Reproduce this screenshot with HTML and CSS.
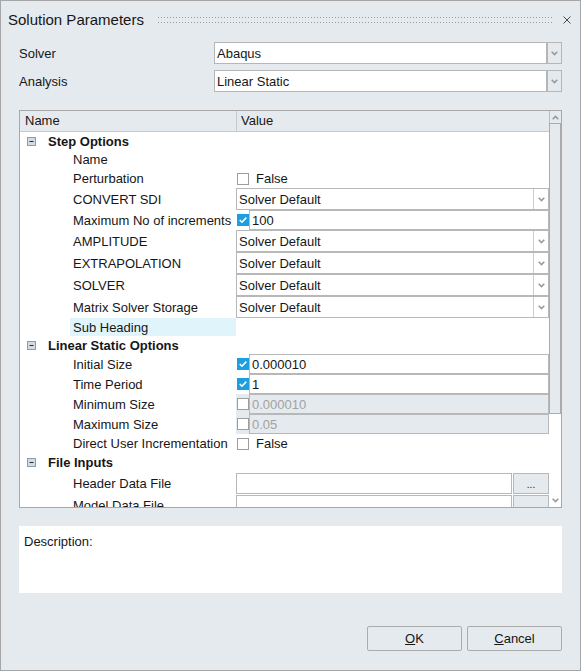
FILE: index.html
```html
<!DOCTYPE html>
<html lang="en">
 <head>
	<title>Solution Parameters</title>
	<meta charset="utf-8"/>
	<link rel="stylesheet" href="styles.css">
 </head>

 <body>
	<div id="dialog">
		<div class="titlebar">
			<span class="title">Solution Parameters</span>
			<span class="grip"></span>
			<svg class="close" width="8" height="8" viewBox="0 0 8 8"><path d="M0.5 0.5L7.5 7.5M7.5 0.5L0.5 7.5" stroke="#4a4a4a" stroke-width="1"/></svg>
		</div>

		<div class="content">
			<div class="form">
				<label>Solver</label>
				<div class="fcombo"><span class="ftext">Abaqus</span><span class="fbtn"><svg width="7" height="5" viewBox="0 0 7 5"><polyline points="0.7,0.7 3.5,3.6 6.3,0.7" fill="none" stroke="#9a9a9a" stroke-width="1.6"/></svg></span></div>
				<label>Analysis</label>
				<div class="fcombo"><span class="ftext">Linear Static</span><span class="fbtn"><svg width="7" height="5" viewBox="0 0 7 5"><polyline points="0.7,0.7 3.5,3.6 6.3,0.7" fill="none" stroke="#9a9a9a" stroke-width="1.6"/></svg></span></div>
			</div>

			<div class="tree">
				<div class="treeMain">
					<div class="thead"><div>Name</div><div class="hval">Value</div></div>

					<div class="group"><svg width="9" height="9" viewBox="0 0 9 9"><rect x="0.5" y="0.5" width="8" height="8" fill="#d3dce4" stroke="#8c9cab"/><path d="M2.5 4.5H6.5" stroke="#2a2a2a"/></svg>Step Options</div>
					<div class="row"><div class="name">Name</div><div class="val"></div></div>
					<div class="row"><div class="name">Perturbation</div><div class="val"><span class="chk"></span><span class="txt">False</span></div></div>
					<div class="row cb"><div class="name">CONVERT SDI</div><div class="val"><div class="combo"><span>Solver Default</span><i><svg width="7" height="5" viewBox="0 0 7 5"><polyline points="0.7,0.7 3.5,3.6 6.3,0.7" fill="none" stroke="#9a9a9a" stroke-width="1.6"/></svg></i></div></div></div>
					<div class="row tb"><div class="name">Maximum No of increments</div><div class="val"><span class="chk on"><svg width="10" height="10" viewBox="0 0 10 10"><polyline points="1.8,5 4,7.2 8.3,2.6" fill="none" stroke="#fff" stroke-width="1.6"/></svg></span><span class="tbox">100</span></div></div>
					<div class="row cb"><div class="name">AMPLITUDE</div><div class="val"><div class="combo"><span>Solver Default</span><i><svg width="7" height="5" viewBox="0 0 7 5"><polyline points="0.7,0.7 3.5,3.6 6.3,0.7" fill="none" stroke="#9a9a9a" stroke-width="1.6"/></svg></i></div></div></div>
					<div class="row cb"><div class="name">EXTRAPOLATION</div><div class="val"><div class="combo"><span>Solver Default</span><i><svg width="7" height="5" viewBox="0 0 7 5"><polyline points="0.7,0.7 3.5,3.6 6.3,0.7" fill="none" stroke="#9a9a9a" stroke-width="1.6"/></svg></i></div></div></div>
					<div class="row cb"><div class="name">SOLVER</div><div class="val"><div class="combo"><span>Solver Default</span><i><svg width="7" height="5" viewBox="0 0 7 5"><polyline points="0.7,0.7 3.5,3.6 6.3,0.7" fill="none" stroke="#9a9a9a" stroke-width="1.6"/></svg></i></div></div></div>
					<div class="row cb"><div class="name">Matrix Solver Storage</div><div class="val"><div class="combo"><span>Solver Default</span><i><svg width="7" height="5" viewBox="0 0 7 5"><polyline points="0.7,0.7 3.5,3.6 6.3,0.7" fill="none" stroke="#9a9a9a" stroke-width="1.6"/></svg></i></div></div></div>
					<div class="row sub"><div class="name hl">Sub Heading</div><div class="val"></div></div>

					<div class="group"><svg width="9" height="9" viewBox="0 0 9 9"><rect x="0.5" y="0.5" width="8" height="8" fill="#d3dce4" stroke="#8c9cab"/><path d="M2.5 4.5H6.5" stroke="#2a2a2a"/></svg>Linear Static Options</div>
					<div class="row tb"><div class="name">Initial Size</div><div class="val"><span class="chk on"><svg width="10" height="10" viewBox="0 0 10 10"><polyline points="1.8,5 4,7.2 8.3,2.6" fill="none" stroke="#fff" stroke-width="1.6"/></svg></span><span class="tbox">0.000010</span></div></div>
					<div class="row tb"><div class="name">Time Period</div><div class="val"><span class="chk on"><svg width="10" height="10" viewBox="0 0 10 10"><polyline points="1.8,5 4,7.2 8.3,2.6" fill="none" stroke="#fff" stroke-width="1.6"/></svg></span><span class="tbox">1</span></div></div>
					<div class="row tb off"><div class="name">Minimum Size</div><div class="val"><span class="chk"></span><span class="tbox">0.000010</span></div></div>
					<div class="row tb off"><div class="name">Maximum Size</div><div class="val"><span class="chk"></span><span class="tbox">0.05</span></div></div>
					<div class="row"><div class="name">Direct User Incrementation</div><div class="val"><span class="chk"></span><span class="txt">False</span></div></div>

					<div class="group gf"><svg width="9" height="9" viewBox="0 0 9 9"><rect x="0.5" y="0.5" width="8" height="8" fill="#d3dce4" stroke="#8c9cab"/><path d="M2.5 4.5H6.5" stroke="#2a2a2a"/></svg>File Inputs</div>
					<div class="row fl"><div class="name">Header Data File</div><div class="val"><span class="tbox file"></span><span class="browse">...</span></div></div>
					<div class="row fl"><div class="name">Model Data File</div><div class="val"><span class="tbox file"></span><span class="browse"></span></div></div>
				</div>

				<div class="scroll">
					<div class="sbUp"><svg width="7" height="5" viewBox="0 0 7 5"><polyline points="0.7,4.3 3.5,1.4 6.3,4.3" fill="none" stroke="#9a9a9a" stroke-width="1.6"/></svg></div>
					<div class="sbThumb"></div>
					<div class="sbTrack"></div>
					<div class="sbDown"><svg width="7" height="5" viewBox="0 0 7 5"><polyline points="0.7,0.7 3.5,3.6 6.3,0.7" fill="none" stroke="#9a9a9a" stroke-width="1.6"/></svg></div>
				</div>
			</div>

			<div class="desc">Description:</div>

			<div class="btns">
				<button type="button"><u>O</u>K</button>
				<button type="button"><u>C</u>ancel</button>
			</div>
		</div>
	</div>
 </body>
</html>
```

FILE: styles.css
```css
*{margin:0; padding:0; box-sizing:border-box;}
body{font-family:"Liberation Sans", Arial, sans-serif; font-size:13px; color:#161616; background:#e5eaee;}

/*######### dialog #########*/
	#dialog{width:581px; height:671px; border:1px solid #a6a6a6; background:#e5eaee; overflow:hidden;}

/*######### titlebar #########*/
	.titlebar{display:flex; align-items:center; height:36px; padding:1px 9px 0 7px;}
	.titlebar .title{font-size:15px; white-space:nowrap;}
	/* two rows of dots (grip) */
	.titlebar .grip{flex:1; height:6px; margin:0 11px 0 14px;
		background:linear-gradient(90deg, #9a9a9a 1px, transparent 1px) 0 0/3px 1px repeat-x,
		           linear-gradient(90deg, #9a9a9a 1px, transparent 1px) 0 100%/3px 1px repeat-x;}
	.titlebar .close{display:block;}

	.content{padding:0 18px;}

/*######### solver / analysis #########*/
	.form{display:grid; grid-template-columns:195px 1fr; row-gap:6px; padding-top:5px;}
	.form label{padding-top:1px; line-height:21px;}
	.fcombo{display:flex; height:22px;}
	.fcombo .ftext{flex:1; background:#fff; border:1px solid #b6b6b6; padding:1px 0 0 2px; line-height:19px;}
	.fcombo .fbtn{width:15px; border:1px solid #b6b6b6; display:flex; align-items:center; justify-content:center;}

/*######### tree (398 high) #########*/
	.tree{display:flex; height:398px; margin-top:18px; border:1px solid #a8a8a8; background:#fff;}
	.treeMain{width:529px; overflow:hidden;}

	.thead{display:grid; grid-template-columns:216px 1fr; height:21px; line-height:20px; background:#e5eaee; border-bottom:1px solid #c6cacd;}
	.thead div{padding-left:5px;}
	.thead .hval{border-left:1px solid #c6cacd; padding-left:4px;}

	.group{display:flex; align-items:center; height:18px; padding-left:7px; font-weight:bold; white-space:nowrap;}
	.group svg{margin-right:12px; flex:none;}
	.group.gf{height:19px;}

	.row{display:grid; grid-template-columns:216px 1fr; height:19px;}
	.row.cb{height:22px;}
	.row.tb{height:20px;}
	.row.sub{height:18px;}
	.row.fl{height:22px;}
	.row .name{margin-left:50px; padding-left:3px; display:flex; align-items:center; white-space:nowrap;}
	.row .name.hl{background:#e0f4fc;}
	.row .val{display:flex; align-items:center;}

/* combo in tree : 313 wide, button 15 */
	.combo{flex:1; display:flex; height:22px; border:1px solid #b8b8b8; background:#fff;}
	.combo span{flex:1; padding:1px 0 0 2px; line-height:19px;}
	.combo i{width:15px; border-left:1px solid #cdcdcd; display:flex; align-items:center; justify-content:center;}

/* checkbox */
	.chk{flex:none; width:12px; height:12px; margin-left:1px; border:1px solid #9d9d9d; background:#fff; display:flex; align-items:center; justify-content:center;}
	.chk.on{background:#1c9fe0; border-color:#1c9fe0;}
	.txt{margin-left:7px;}

/* textbox */
	.tbox{flex:1; height:20px; border:1px solid #b8b8b8; background:#fff; padding:1px 0 0 2px; line-height:17px;}
	.row.off .val{background:#e5eaee;}
	.row.off .tbox{background:#e5eaee; color:#a2a2a2;}
	.tbox.file{height:21px;}
	.browse{width:36px; height:21px; margin-left:1px; border:1px solid #b8b8b8; background:#e5eaee; font-size:10px; line-height:21px; text-align:center; overflow:hidden;}

/*######### scrollbar #########*/
	.scroll{width:12px; display:flex; flex-direction:column;}
	.sbUp{height:12px; background:#e5eaee; border-left:1px solid #b9bcc0; display:flex; align-items:center; justify-content:center;}
	.sbThumb{height:291px; background:#e5eaee; border:1px solid #acacac;}
	.sbTrack{flex:1;}
	.sbDown{height:14px; display:flex; align-items:center; justify-content:center;}

/*######### description #########*/
	.desc{height:67px; margin-top:18px; padding:8px 5px; background:#fff; line-height:15px;}

/*######### buttons #########*/
	.btns{display:flex; justify-content:flex-end; gap:5px; margin-top:33px;}
	.btns button{width:95px; height:25px; border:1px solid #acacac; border-radius:2px; background:#e5eaee; font-family:"Liberation Sans", Arial, sans-serif; font-size:13px; color:#161616;}
```
